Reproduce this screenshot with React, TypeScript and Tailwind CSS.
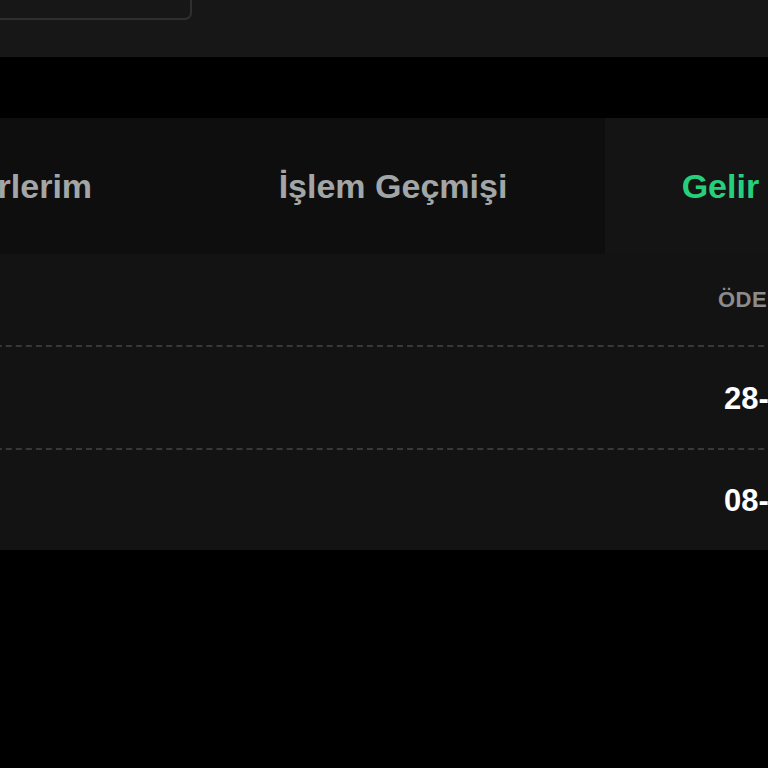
import React, { useState } from 'react';

interface Payout {
  date: string;
}

const tabs = ['Açık Emirlerim', 'İşlem Geçmişi', 'Gelir Dağıtımları'];

const payouts: Payout[] = [{ date: '28-05-2024' }, { date: '08-11-2023' }];

const App: React.FC = () => {
  const [activeTab, setActiveTab] = useState<number>(2);

  return (
    <div
      className="h-screen w-full overflow-hidden bg-black"
      style={{ fontFamily: '"Liberation Sans", Arial, sans-serif' }}
    >
      <div className="-ml-[235px] -mt-[44px] w-[1260px]">
        {/* search panel */}
        <div className="bg-[#171717] pl-[27px] pt-[16px] pb-[37px]">
          <div className="h-[48px] w-[400px] rounded-[7px] border-2 border-[#2f2f2f] bg-[#171717]" />
        </div>

        <div className="h-[61px]" />

        {/* tabs */}
        <div className="grid h-[136px] grid-cols-3 bg-[#0e0e0e]">
          {tabs.map((tab, i) => (
            <button
              key={tab}
              onClick={() => setActiveTab(i)}
              className={`flex items-center justify-center whitespace-nowrap pr-[4px] pt-[1px] text-[34px] font-bold ${
                activeTab === i ? 'bg-[#141414] text-[#25cf7c]' : 'text-[#a2a6a6]'
              }`}
            >
              {tab}
            </button>
          ))}
        </div>

        {/* income table */}
        <div className="bg-[#131313]">
          <div className="grid h-[93px] grid-cols-[952px_220px_1fr] items-center border-b-2 border-dashed border-[#383838]">
            <div />
            <div className="whitespace-nowrap pl-[1px] text-[22px] font-bold uppercase tracking-[0.02em] text-[#8c8c8c]">
              ÖDEME TARİHİ
            </div>
            <div />
          </div>
          {payouts.map((p, i) => (
            <div
              key={p.date}
              className={`grid grid-cols-[952px_220px_1fr] items-center ${
                i === 0 ? 'h-[103px] border-b-2 border-dashed border-[#383838]' : 'h-[100px]'
              }`}
            >
              <div />
              <div className="whitespace-nowrap pl-[7px] pt-[3px] text-[31px] font-bold text-white">{p.date}</div>
              <div />
            </div>
          ))}
        </div>
      </div>
    </div>
  );
};

export default App;
